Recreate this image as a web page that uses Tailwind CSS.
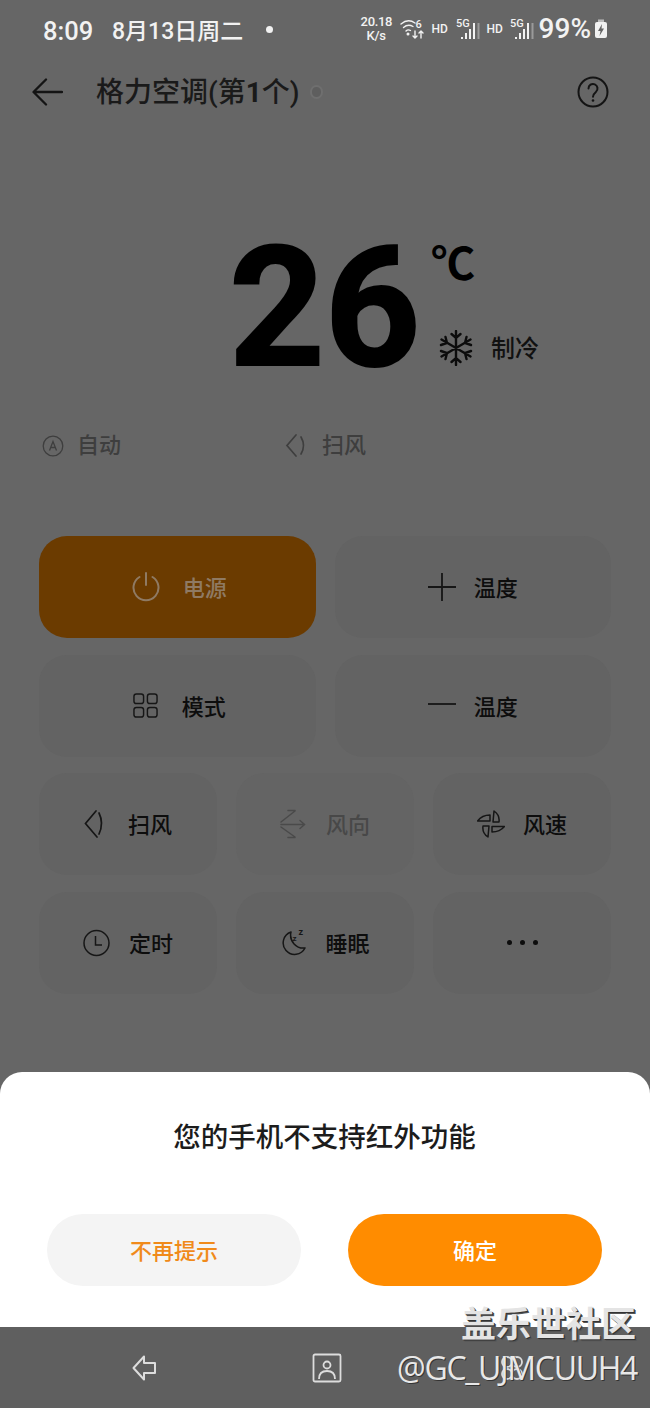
<!DOCTYPE html>
<html lang="zh-CN">
<head>
  <meta charset="UTF-8" />
  <title>格力空调</title>
  <script src="https://cdn.jsdelivr.net/npm/@tailwindcss/browser@4"></script>
</head>
<body class="bg-[#666666] font-['Roboto','Noto_Sans_CJK_SC',sans-serif]">
<div class="relative w-[650px] h-[1408px] overflow-hidden flex flex-col">

  <!-- status bar -->
  <div class="h-[58px] flex items-center pl-[43px] pr-[42px] text-[#f2f2f2] shrink-0">
    <span class="text-[25.500px] font-medium leading-none w-[69px] mt-[5px]">8:09</span>
    <span class="text-[23px] font-medium leading-none w-[146px] mt-[5px] whitespace-nowrap">8月13日周二</span>
    <span class="w-[7px] h-[7px] rounded-full bg-[#f2f2f2] ml-[8px]"></span>
    <div class="ml-auto flex items-center">
      <span class="text-[13px] font-medium leading-[14px] text-center w-[31px] tracking-[-0.3px]">20.18<br>K/s</span>
      <svg class="ml-[8px]" width="26" height="22" viewBox="0 0 26 22" fill="none" stroke="#f2f2f2" stroke-width="1.4" stroke-linecap="round"><path d="M1 6 Q8 0 15 5"/><path d="M3.500 9.500 Q8 5.500 13 8.500"/><path d="M6 13 Q8 11 10.500 12.500"/><circle cx="8" cy="16" r="0.8" fill="#f2f2f2"/><path d="M15 13v7M13 18l2 2 2-2M21 20v-7M19 15l2-2 2 2"/><text x="15.500" y="10" font-size="11" fill="#f2f2f2" stroke="none" font-weight="500">6</text></svg>
      <span class="ml-[6px] text-[12px] font-medium w-[15px] leading-none whitespace-nowrap">HD</span>
      <svg class="ml-[9px]" width="24" height="24" viewBox="0 0 24 24" fill="#f2f2f2"><text x="0" y="10" font-size="11" font-weight="500">5G</text><rect x="5" y="20" width="2" height="2"/><rect x="9" y="16" width="2" height="6"/><rect x="13" y="12" width="2" height="10"/><rect x="17" y="6" width="2" height="16"/><rect x="21.500" y="6" width="2" height="16" fill="#9a9a9a"/></svg>
      <span class="ml-[7px] text-[12px] font-medium w-[15px] leading-none whitespace-nowrap">HD</span>
      <svg class="ml-[8px]" width="24" height="24" viewBox="0 0 24 24" fill="#f2f2f2"><text x="0" y="10" font-size="11" font-weight="500">5G</text><rect x="5" y="20" width="2" height="2"/><rect x="9" y="16" width="2" height="6"/><rect x="13" y="12" width="2" height="10"/><rect x="17" y="6" width="2" height="16"/><rect x="21.500" y="6" width="2" height="16" fill="#9a9a9a"/></svg>
      <span class="ml-[5px] text-[28px] font-medium leading-none">99%</span>
      <svg class="ml-[3px]" width="14" height="20" viewBox="0 0 14 20"><rect x="4" y="0.500" width="6" height="3" fill="#bdbdbd"/><rect x="1" y="3" width="12" height="16" rx="2" fill="#f2f2f2"/><path d="M8 5 L4 12 H6.500 L5.500 17 L10 9.500 H7.500 Z" fill="#666666"/></svg>
    </div>
  </div>

  <!-- title bar -->
  <div class="h-[68px] flex items-center pl-[32px] pr-[41px] shrink-0">
    <svg width="31" height="30" viewBox="0 0 31 30" fill="none" stroke="#141414" stroke-width="2.300" stroke-linecap="round" stroke-linejoin="round"><path d="M30 15H2M14 2.500 1.500 15 14 27.500"/></svg>
    <span class="ml-[33px] text-[28px] font-medium leading-none text-[#1a1a1a] mt-[2px]">格力空调(第<span class="font-bold">1</span>个)</span>
    <span class="ml-[10px] w-[13px] h-[14px] rounded-full bg-[#5e5e5e] border-2 border-[#6f6f6f]"></span>
    <svg class="ml-auto" width="32" height="32" viewBox="0 0 32 32" fill="none" stroke="#141414" stroke-width="2"><circle cx="16" cy="16" r="14.500"/><path d="M11.500 12.500a4.500 4.500 0 1 1 7.500 3.300c-2 1.700-3 2.500-3 5" stroke-linecap="round"/><circle cx="16" cy="24.500" r="1.300" fill="#141414" stroke="none"/></svg>
  </div>

  <!-- temperature -->
  <div class="h-[298px] shrink-0 flex items-start pl-[229px] pt-[99px]">
    <span class="w-[192px] text-[167px] font-bold leading-[167px] text-black [-webkit-text-stroke:2px_#000]">26</span>
    <div class="flex flex-col">
      <span class="text-[44px] font-bold leading-none text-black mt-[18px] ml-[10px] tracking-[-4px]">℃</span>
      <div class="flex items-center mt-[43px] ml-[17px]">
        <svg width="36" height="36" viewBox="0 0 36 36" fill="none" stroke="#0c0c0c" stroke-width="2.400" stroke-linecap="round"><path d="M18 1v34M3.500 9.500l29 17M32.500 9.500l-29 17M13.500 4l4.500 4 4.500-4M13.500 32l4.500-4 4.500 4M3 15l6-2-1.500-6M33 15l-6-2 1.500-6M3 21l6 2-1.500 6M33 21l-6 2 1.500 6"/></svg>
        <span class="ml-[17px] mt-[2px] text-[24px] font-medium leading-none text-[#111111] whitespace-nowrap">制冷</span>
      </div>
    </div>
  </div>

  <!-- state row -->
  <div class="h-[44px] flex items-center pl-[42px] shrink-0 text-[#3e3e3e]">
    <div class="flex items-center w-[243px]">
      <svg width="22" height="22" viewBox="0 0 22 22" fill="none" stroke="#3e3e3e" stroke-width="1.300"><circle cx="11" cy="11" r="9.800"/><path d="M7.500 15.500 11 6.500l3.500 9M8.700 12.500h4.600"/></svg>
      <span class="ml-[13px] text-[22px] font-medium leading-none">自动</span>
    </div>
    <div class="flex items-center">
      <svg width="22" height="26" viewBox="0 0 22 26" fill="none" stroke="#3e3e3e" stroke-width="1.700" stroke-linecap="round"><path d="M11 2 2 12.500 11 23M16 4q5 8.500 0 17"/></svg>
      <span class="ml-[15px] text-[22px] font-medium leading-none">扫风</span>
    </div>
  </div>

  <!-- buttons -->
  <div class="mt-[68px] px-[39px] flex flex-col gap-[16.67px] shrink-0">
    <div class="grid grid-cols-2 gap-[19px]">
      <div class="h-[102px] rounded-[28px] bg-[#6b3b00] flex items-center justify-center gap-[23px] pl-[4px] text-[#8f7a63]">
        <svg width="28" height="30" viewBox="0 0 28 30" fill="none" stroke="#8f7a63" stroke-width="2" stroke-linecap="round"><path d="M14 1v12M7.500 5a12.500 12.500 0 1 0 13 0"/></svg>
        <span class="mt-[4px] text-[22px] font-medium leading-none">电源</span>
      </div>
      <div class="h-[102px] rounded-[28px] bg-[#636363] flex items-center justify-center gap-[18px]">
        <svg width="28" height="28" viewBox="0 0 28 28" stroke="#161616" stroke-width="1.800"><path d="M14 0v28M0 14h28"/></svg>
        <span class="mt-[4px] text-[22px] font-medium leading-none text-[#0d0d0d]">温度</span>
      </div>
    </div>
    <div class="grid grid-cols-2 gap-[19px]">
      <div class="h-[102px] rounded-[28px] bg-[#636363] flex items-center justify-center gap-[24px] pl-[4px]">
        <svg width="25" height="25" viewBox="0 0 26 26" fill="none" stroke="#161616" stroke-width="1.500"><rect x="1" y="1" width="10" height="10" rx="2.500"/><rect x="15" y="1" width="10" height="10" rx="2.500"/><rect x="1" y="15" width="10" height="10" rx="2.500"/><rect x="15" y="15" width="10" height="10" rx="2.500"/></svg>
        <span class="mt-[4px] text-[22px] font-medium leading-none text-[#0d0d0d]">模式</span>
      </div>
      <div class="h-[102px] rounded-[28px] bg-[#636363] flex items-center justify-center gap-[18px]">
        <svg width="28" height="28" viewBox="0 0 28 28" stroke="#161616" stroke-width="1.800"><path d="M0 12h28"/></svg>
        <span class="mt-[4px] text-[22px] font-medium leading-none text-[#0d0d0d]">温度</span>
      </div>
    </div>
    <div class="grid grid-cols-3 gap-[19px]">
      <div class="h-[102px] rounded-[28px] bg-[#636363] flex items-center justify-center gap-[22px]">
        <svg width="22" height="30" viewBox="0 0 22 30" fill="none" stroke="#161616" stroke-width="1.700" stroke-linecap="round"><path d="M12 2 1.500 14.500 13 28M15 4q5 10 0 21"/></svg>
        <span class="mt-[4px] text-[22px] font-medium leading-none text-[#0d0d0d]">扫风</span>
      </div>
      <div class="h-[102px] rounded-[28px] bg-[#646464] flex items-center justify-center gap-[20px]">
        <svg width="26" height="30" viewBox="0 0 26 30" fill="none" stroke="#4a4a4a" stroke-width="1.500" stroke-linecap="round"><path d="M1 13 15 2M8 1.500h7M1 18l14 10M8 28.500h7M1 15.500h23M20 11.500l4.500 4-4.500 4"/></svg>
        <span class="mt-[4px] text-[22px] font-medium leading-none text-[#484848]">风向</span>
      </div>
      <div class="h-[102px] rounded-[28px] bg-[#636363] flex items-center justify-center gap-[18px]">
        <svg width="28" height="30" viewBox="0 0 28 30" fill="none" stroke="#161616" stroke-width="1.500" stroke-linejoin="round"><path d="M17 2Q23 6 22 13H16ZM0.500 12Q5 6 13 6V12ZM27.500 17.500Q23 23 15 23V17.500ZM11 28Q5 24 6 17H12Z"/></svg>
        <span class="mt-[4px] text-[22px] font-medium leading-none text-[#0d0d0d]">风速</span>
      </div>
    </div>
    <div class="grid grid-cols-3 gap-[19px]">
      <div class="h-[102px] rounded-[28px] bg-[#636363] flex items-center justify-center gap-[19px]">
        <svg width="27" height="28" viewBox="0 0 27 28" fill="none" stroke="#161616" stroke-width="1.500"><circle cx="13.500" cy="14" r="12.500"/><path d="M12.500 7v9H19"/></svg>
        <span class="mt-[4px] text-[22px] font-medium leading-none text-[#0d0d0d]">定时</span>
      </div>
      <div class="h-[102px] rounded-[28px] bg-[#636363] flex items-center justify-center gap-[19px]">
        <svg width="26" height="30" viewBox="0 0 26 30" fill="none" stroke="#161616" stroke-width="1.500" stroke-linejoin="round"><path d="M11 4A11.500 11.500 0 1 0 25 20A13 13 0 0 1 11 4Z"/><text x="12.500" y="13" font-size="8" fill="#161616" stroke="none" font-weight="700">z</text><text x="18.500" y="7" font-size="9" fill="#161616" stroke="none" font-weight="700">z</text></svg>
        <span class="mt-[4px] text-[22px] font-medium leading-none text-[#0d0d0d]">睡眠</span>
      </div>
      <div class="h-[102px] rounded-[28px] bg-[#636363] flex items-center justify-center gap-[8px]">
        <span class="w-[5px] h-[5px] rounded-full bg-[#0d0d0d]"></span>
        <span class="w-[5px] h-[5px] rounded-full bg-[#0d0d0d]"></span>
        <span class="w-[5px] h-[5px] rounded-full bg-[#0d0d0d]"></span>
      </div>
    </div>
  </div>

  <!-- dialog sheet -->
  <div class="mt-auto bg-white rounded-t-[22px] h-[255px] pl-[47px] pr-[48px] pt-[52px] shrink-0">
    <p class="text-[27.500px] leading-[28px] text-center text-[#1c1c1c] font-medium">您的手机不支持红外功能</p>
    <div class="mt-[62px] flex justify-between">
      <div class="w-[254px] h-[72px] rounded-full bg-[#f4f4f4] flex items-center justify-center pt-[2px] text-[22px] font-medium text-[#f08a1a]">不再提示</div>
      <div class="w-[254px] h-[72px] rounded-full bg-[#ff8c00] flex items-center justify-center pt-[2px] text-[22px] font-medium text-white">确定</div>
    </div>
  </div>

  <!-- nav bar -->
  <div class="h-[81px] bg-[#5f5f5f] shrink-0 relative">
    <svg class="absolute left-[132px] top-[28px]" width="26" height="26" viewBox="0 0 26 26" fill="none" stroke="#dddddd" stroke-width="2" stroke-linejoin="round"><path d="M12 1.500 1.500 13 12 24.500V18h11V8H12Z"/></svg>
    <svg class="absolute left-[312px] top-[26px]" width="30" height="30" viewBox="0 0 30 30" fill="none" stroke="#dddddd" stroke-width="1.800"><rect x="1.500" y="1.500" width="27" height="27" rx="1.500"/><circle cx="15" cy="12" r="3.500"/><path d="M7 26q0-8 8-8t8 8"/></svg>
    <svg class="absolute left-[497px] top-[26px]" width="30" height="30" viewBox="0 0 30 30" fill="none" stroke="#dddddd" stroke-width="1.800"><circle cx="10" cy="9" r="5"/><circle cx="20" cy="9" r="5"/><circle cx="10" cy="21" r="5"/><circle cx="20" cy="21" r="5"/></svg>
  </div>

  <!-- watermark -->
  <div class="absolute right-[14px] top-[1308px] text-[35px] leading-none font-bold text-[#e4e4e4] [text-shadow:1px_1px_0_#333,2px_2px_0_#555] whitespace-nowrap">盖乐世社区</div>
  <div class="absolute right-[13px] top-[1352px] text-[32px] leading-none font-['Open_Sans',sans-serif] text-[#e8e8e8] [text-shadow:1px_1px_0_#333] tracking-[-1.300px] whitespace-nowrap">@GC_UJMCUUH4</div>
</div>
</body>
</html>
